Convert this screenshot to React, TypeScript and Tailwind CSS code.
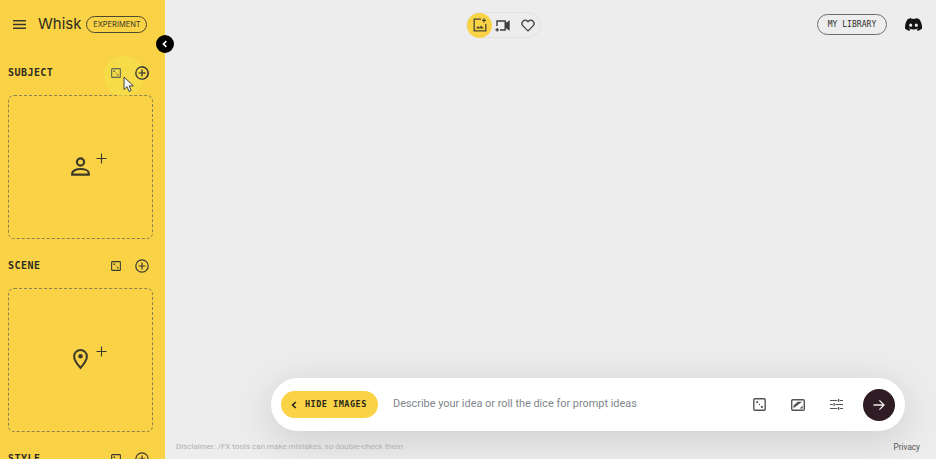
import React from "react";

const ink = "#3d3a2a";

function Dice({ size = 12, color = "#3a3a32" }: { size?: number; color?: string }) {
  return (
    <svg width={size} height={size} viewBox="0 0 12 12" fill="none">
      <rect x="0.75" y="0.75" width="10.5" height="10.5" rx="0.8" stroke={color} strokeWidth="1.3" />
      <circle cx="3.8" cy="3.8" r="1" fill={color} />
      <circle cx="8.2" cy="8.2" r="1" fill={color} />
      <circle cx="6" cy="6" r="0.6" fill={color} />
    </svg>
  );
}

function PlusCircle() {
  return (
    <svg width="14" height="14" viewBox="0 0 14 14" fill="none" stroke="#3a3a32" strokeWidth="1.2">
      <circle cx="7" cy="7" r="6.2" />
      <path d="M7 3.6v6.8M3.6 7h6.8" />
    </svg>
  );
}

function Person() {
  return (
    <svg width="19" height="19" viewBox="0 0 19 19" fill="none" stroke={ink} strokeWidth="2.2">
      <circle cx="9.5" cy="5" r="3.6" />
      <path d="M1.2 17.6v-1.2c0-2.8 4-4.4 8.3-4.4s8.3 1.6 8.3 4.4v1.2z" />
    </svg>
  );
}

function Pin() {
  return (
    <svg width="15" height="22" viewBox="0 0 16 22" fill="none">
      <path d="M8 20.4C4 15.8 1.2 12.2 1.2 8.2a6.8 6.8 0 0 1 13.6 0c0 4-2.8 7.6-6.8 12.2z" stroke={ink} strokeWidth="2.2" />
      <circle cx="8" cy="8" r="2.4" fill={ink} />
    </svg>
  );
}

function SmallPlus() {
  return (
    <svg width="11" height="11" viewBox="0 0 11 11" stroke={ink} strokeWidth="1.1" className="absolute left-[87px] top-[57px]">
      <path d="M5.5 0.5v10M0.5 5.5h10" />
    </svg>
  );
}

function Section({ title, icon }: { title: string; icon?: React.ReactNode }) {
  return (
    <section className="flex flex-col">
      <div className="flex h-[14px] items-center justify-between pl-2 pr-[16px]">
        <span className="font-['DejaVu_Sans_Mono',monospace] text-[10px] leading-none font-bold tracking-[0.45px] text-[#2f2d22]">{title}</span>
        <div className="flex items-center gap-[14px]">
          <Dice size={10} />
          <PlusCircle />
        </div>
      </div>
      {icon && (
        <div className="relative mx-2 mt-[15px] flex h-[144px] w-[145px] items-center justify-center rounded-[6px] border border-dashed border-[#8a8250]">
          <div className="relative top-[-1px] flex items-center justify-center">{icon}</div>
          <SmallPlus />
        </div>
      )}
    </section>
  );
}

export default function App() {
  return (
    <div className="relative flex h-[459px] w-[936px] overflow-hidden bg-[#ededed] font-['Inter',sans-serif]">
      <aside className="relative flex w-[165px] shrink-0 flex-col bg-[#f9d246]">
        <header className="flex h-[66px] shrink-0 items-start pl-[13px] pt-[16px]">
          <svg width="13" height="9" viewBox="0 0 13 9" fill="none" stroke="#3a3828" strokeWidth="1.4" className="mt-[4px]">
            <path d="M0 .75h13M0 4.5h13M0 8.25h13" />
          </svg>
          <span className="ml-[12px] text-[15px] leading-[16px] text-[#2c2a1d]">Whisk</span>
          <span className="ml-[5px] flex h-[17px] w-[61px] items-center justify-center rounded-full border border-[#4c4830] text-[7.5px] leading-none text-[#3d3a2a]">EXPERIMENT</span>
        </header>
        <div className="flex flex-col gap-[20px]">
          <Section title="SUBJECT" icon={<Person />} />
          <Section title="SCENE" icon={<Pin />} />
          <Section title="STYLE" />
        </div>
        <div className="absolute left-[104px] top-[56px] h-[40px] w-[40px] rounded-full bg-[#f7e04a]/70" />
        <div className="absolute left-[111px] top-[68px]">
          <Dice size={10} color="#6a6a50" />
        </div>
        <div className="absolute left-[135px] top-[66px]">
          <PlusCircle />
        </div>
        <svg width="12" height="17" viewBox="0 0 12 17" className="absolute left-[123px] top-[76px]">
          <path d="M1 1v12.5l3-2.8 2 4.8 2.2-1-2-4.6h4.2z" fill="#f4f4f4" stroke="#333" strokeWidth="0.9" />
        </svg>
      </aside>

      <div className="absolute left-[156px] top-[35px] z-10 flex h-[18px] w-[18px] items-center justify-center rounded-full bg-black">
        <svg width="8" height="8" viewBox="0 0 8 8" fill="none" stroke="#fff" strokeWidth="1.6">
          <path d="M5.4 1.2 2.4 4l3 2.8" />
        </svg>
      </div>

      <main className="relative flex min-w-0 flex-1 flex-col">
        <div className="relative flex h-[50px] shrink-0 items-start">
          <div className="ml-[301px] mt-[12px] flex h-[26px] w-[75px] items-center rounded-full border border-[#e2e2e2]">
            <span className="flex h-[25px] w-[25px] items-center justify-center rounded-full bg-[#f9d246]">
              <svg width="14" height="14" viewBox="0 0 14 14" fill="none" stroke="#4a4632" strokeWidth="1.3">
                <path d="M8 1.2H1.2v11.6h11.6V6" />
                <path d="M3 10.6l2-2.6 1.6 1.6 1.6-2 2.6 3z" fill="#4a4632" stroke="none" />
                <path d="M11 .4v4M9 2.4h4" strokeWidth="1.2" />
              </svg>
            </span>
            <span className="ml-[2px] flex w-[16px] items-center justify-center">
              <svg width="15" height="13" viewBox="0 0 15 13" fill="none" stroke="#3e3e3e" strokeWidth="1.4">
                <path d="M2 7V2h8.2v9H5" />
                <path d="M10.2 5 14 2.6v7.8L10.2 8" fill="#3e3e3e" />
                <path d="M2.2 9v3.6M.4 10.8H4" strokeWidth="1.3" />
              </svg>
            </span>
            <span className="ml-[11px] flex items-center justify-center">
              <svg width="14" height="13" viewBox="0 0 24 22" fill="none" stroke="#3e3e3e" strokeWidth="2.2">
                <path d="M12 20.2 3.4 11.6a5.6 5.6 0 0 1 0-7.9 5.6 5.6 0 0 1 7.9 0l.7.8.7-.8a5.6 5.6 0 0 1 7.9 0 5.6 5.6 0 0 1 0 7.9z" />
              </svg>
            </span>
          </div>
          <span className="ml-[276px] mt-[14px] flex h-[21px] w-[70px] items-center justify-center rounded-full border border-[#6c6c6c] font-['DejaVu_Sans_Mono',monospace] text-[8px] leading-none tracking-[0.05px] text-[#2b2b2b]">MY LIBRARY</span>
          <svg width="17" height="13" viewBox="0 0 127 96" className="ml-[18px] mt-[18px]" fill="#141414">
            <path d="M107.7 8.1A105 105 0 0 0 81.5 0a72 72 0 0 0-3.4 6.8 97.7 97.7 0 0 0-29 0A72 72 0 0 0 45.7 0a105.9 105.9 0 0 0-26.3 8.1C2.8 32.7-1.7 56.6.6 80.2a105.7 105.7 0 0 0 32.2 16.2 78 78 0 0 0 6.9-11.2 68.4 68.4 0 0 1-10.9-5.2l2.7-2.1a75.6 75.6 0 0 0 64.3 0l2.7 2.1a68.7 68.7 0 0 1-10.9 5.2 77 77 0 0 0 6.9 11.2 105.3 105.3 0 0 0 32.2-16.2c2.7-27.4-4.6-51.1-19-72.1zM42.5 65.7c-6.3 0-11.4-5.7-11.4-12.8S36.1 40 42.5 40s11.5 5.8 11.4 12.9-5 12.8-11.4 12.8zm42.2 0c-6.2 0-11.4-5.7-11.4-12.8S78.4 40 84.7 40s11.5 5.8 11.4 12.9-5 12.8-11.4 12.8z" />
          </svg>
        </div>

        <div className="flex-1" />

        <div className="ml-[106px] flex h-[53px] w-[634px] shrink-0 items-center rounded-full bg-white pl-[10px] pr-[10px] shadow-[0_8px_40px_rgba(0,0,0,0.14)]">
          <span className="flex h-[27px] w-[97px] items-center rounded-full bg-[#f9d246] pl-[10px] font-['DejaVu_Sans_Mono',monospace] text-[8.5px] leading-none font-bold tracking-[0.5px] text-[#2b2918]">
            <svg width="6" height="8" viewBox="0 0 6 8" fill="none" stroke="#2b2918" strokeWidth="1.6" className="mr-[8px] shrink-0">
              <path d="M4.8 1 1.6 4l3.2 3" />
            </svg>
            HIDE IMAGES
          </span>
          <span className="ml-[15px] flex-1 font-['Roboto',sans-serif] text-[10.9px] leading-none text-[#80868b]">Describe your idea or roll the dice for prompt ideas</span>
          <Dice size={13} color="#555" />
          <svg width="14" height="12" viewBox="0 0 14 12" fill="none" className="ml-[25px]">
            <rect x="0.7" y="0.7" width="12.6" height="10.6" rx="1.2" stroke="#555" strokeWidth="1.4" />
            <path d="M2.5 9.2V6.6L6.6 2.8h4.6zM11.6 6.4v3h-3z" fill="#555" />
          </svg>
          <svg width="13" height="13" viewBox="0 0 14 13" fill="none" stroke="#555" strokeWidth="1.3" className="ml-[25px]">
            <path d="M0 2.2h8M10.6 2.2H14M9.3.5v3.4M0 6.5h3M5.8 6.5H14M4.4 4.8v3.4M0 10.8h8M10.6 10.8H14M9.3 9.1v3.4" />
          </svg>
          <span className="ml-[20px] flex h-[32px] w-[32px] items-center justify-center rounded-full bg-[#2f1c24]">
            <svg width="12" height="12" viewBox="0 0 12 12" fill="none" stroke="#f0f0f0" strokeWidth="1.3">
              <path d="M0.5 6h10.5M6.4 1.4 11 6l-4.6 4.6" />
            </svg>
          </span>
        </div>

        <footer className="flex h-[28px] shrink-0 items-center justify-between pt-[4px] pl-[11px] pr-[16px] font-['Roboto',sans-serif]">
          <span className="text-[8px] leading-none text-[#b0b0b0]">Disclaimer: /FX tools can make mistakes, so double-check them</span>
          <span className="text-[8.2px] leading-none text-[#555]">Privacy</span>
        </footer>
      </main>
    </div>
  );
}
